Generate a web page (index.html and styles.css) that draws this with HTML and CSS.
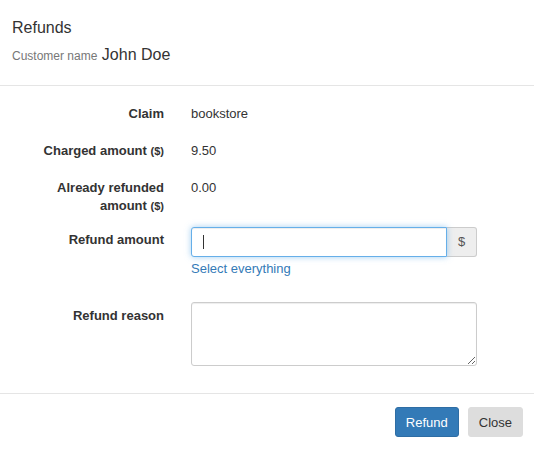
FILE: index.html
```html
<!DOCTYPE html>
<html>
<head>
<meta charset="utf-8">
<link rel="stylesheet" href="styles.css">
</head>
<body>
<div class="modal">
  <div class="modal-header">
    <h4 class="title">Refunds</h4>
    <div class="customer"><span class="customer-label">Customer name</span> <span class="customer-name">John Doe</span></div>
  </div>
  <div class="modal-body">
    <div class="row row-static">
      <div class="label">Claim</div>
      <div class="value">bookstore</div>
    </div>
    <div class="row row-static">
      <div class="label">Charged amount <small>($)</small></div>
      <div class="value">9.50</div>
    </div>
    <div class="row row-static row-multi">
      <div class="label"><span class="line">Already refunded</span> <span class="line">amount <small>($)</small></span></div>
      <div class="value">0.00</div>
    </div>
    <div class="row row-input">
      <div class="label">Refund amount</div>
      <div class="field">
        <div class="input-group">
          <div class="input focused"><span class="caret"></span></div>
          <span class="addon">$</span>
        </div>
        <a class="help-link" href="#">Select everything</a>
      </div>
    </div>
    <div class="row row-textarea">
      <div class="label">Refund reason</div>
      <div class="field">
        <textarea class="textarea"></textarea>
      </div>
    </div>
  </div>
  <div class="modal-footer">
    <button class="btn btn-primary">Refund</button>
    <button class="btn btn-default">Close</button>
  </div>
</div>
</body>
</html>
```
FILE: styles.css
```css
* { box-sizing: border-box; }
html, body { margin: 0; padding: 0; background: #fff; }
body {
  font-family: "Liberation Sans", Arial, sans-serif;
  font-size: 13px;
  line-height: 18px;
  color: #333;
}
.modal { width: 534px; height: 450px; background: #fff; }

.modal-header {
  padding: 17px 12px 19px;
  border-bottom: 1px solid #e5e5e5;
}
.title {
  margin: 0 0 5px;
  font-size: 16px;
  line-height: 22px;
  height: 22px;
  font-weight: normal;
  color: #333;
}
.customer { font-size: 16px; line-height: 22px; height: 22px; }
.customer-label { font-size: 12px; line-height: 1; color: #777; }
.customer-name { color: #333; }

.modal-body { padding: 17px 12px 27px; }
.row {
  display: grid;
  grid-template-columns: 152px 286px;
  column-gap: 27px;
  margin-bottom: 15px;
}
.label {
  font-weight: bold;
  text-align: right;
}
.label .line { display: block; }
.label small { font-size: 85%; line-height: 1; }
.row-static .label, .row-static .value { padding: 2px 0; }
.row-multi { margin-bottom: 10px; }
.row-input .label { padding-top: 4px; }
.row-textarea { margin-bottom: 0; }
.row-textarea .label { padding-top: 5px; }

.input-group { display: flex; height: 30px; }
.input {
  flex: 1;
  border: 1px solid #66afe9;
  border-radius: 3px 0 0 3px;
  box-shadow: inset 0 1px 1px rgba(0,0,0,.075), 0 0 6px rgba(102,175,233,.6);
  background: #fff;
  padding: 7px 0 0 11px;
  position: relative;
  z-index: 1;
}
.caret { display: block; width: 1px; height: 14px; background: #333; }
.addon {
  width: 30px;
  border: 1px solid #ccc;
  border-left: 0;
  border-radius: 0 3px 3px 0;
  background: #eee;
  color: #555;
  display: flex;
  align-items: center;
  justify-content: center;
}
.help-link {
  display: block;
  margin: 3px 0 9px;
  color: #337ab7;
  text-decoration: none;
}
.textarea {
  display: block;
  width: 286px;
  height: 64px;
  border: 1px solid #ccc;
  border-radius: 3px;
  box-shadow: inset 0 1px 1px rgba(0,0,0,.075);
  resize: vertical;
  font: inherit;
  margin: 0;
}

.modal-footer {
  border-top: 1px solid #e5e5e5;
  padding: 13px 11px 13px;
  display: flex;
  justify-content: flex-end;
  gap: 9px;
}
.btn {
  height: 30px;
  padding: 0 10px;
  font-family: inherit;
  font-size: 13px;
  border-radius: 3px;
  border: 1px solid transparent;
}
.btn-primary { background: #337ab7; border-color: #2e6da4; color: #fff; }
.btn-default { background: #ddd; border-color: #ddd; color: #333; }
```
